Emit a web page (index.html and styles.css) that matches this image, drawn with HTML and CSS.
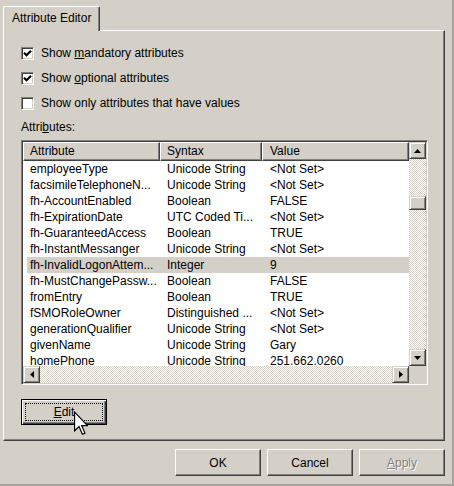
FILE: index.html
```html
<!DOCTYPE html>
<html>
<head>
<meta charset="utf-8">
<link rel="stylesheet" href="styles.css">
</head>
<body>
<div class="window">
  <div class="tabs"><div class="tab">Attribute Editor</div></div>
  <div class="panel">
    <div class="check"><span class="box"><svg width="9" height="9" viewBox="0 0 9 9"><polyline points="1,3.8 3.5,6.3 8,1.8" fill="none" stroke="#000" stroke-width="2.2"/></svg></span><span>Show <u>m</u>andatory attributes</span></div>
    <div class="check"><span class="box"><svg width="9" height="9" viewBox="0 0 9 9"><polyline points="1,3.8 3.5,6.3 8,1.8" fill="none" stroke="#000" stroke-width="2.2"/></svg></span><span>Show <u>o</u>ptional attributes</span></div>
    <div class="check"><span class="box"></span><span>Show only attributes that have values</span></div>
    <div class="label">Attri<u>b</u>utes:</div>
    <div class="listbox">
      <div class="list-main">
        <div class="list-area">
          <div class="header">
            <div class="hcell">Attribute</div>
            <div class="hcell">Syntax</div>
            <div class="hcell">Value</div>
          </div>
          <div class="rows">
            <div class="row"><span>employeeType</span><span>Unicode String</span><span>&lt;Not Set&gt;</span></div>
            <div class="row"><span>facsimileTelephoneN...</span><span>Unicode String</span><span>&lt;Not Set&gt;</span></div>
            <div class="row"><span>fh-AccountEnabled</span><span>Boolean</span><span>FALSE</span></div>
            <div class="row"><span>fh-ExpirationDate</span><span>UTC Coded Ti...</span><span>&lt;Not Set&gt;</span></div>
            <div class="row"><span>fh-GuaranteedAccess</span><span>Boolean</span><span>TRUE</span></div>
            <div class="row"><span>fh-InstantMessanger</span><span>Unicode String</span><span>&lt;Not Set&gt;</span></div>
            <div class="row selected"><span>fh-InvalidLogonAttem...</span><span>Integer</span><span>9</span></div>
            <div class="row"><span>fh-MustChangePassw...</span><span>Boolean</span><span>FALSE</span></div>
            <div class="row"><span>fromEntry</span><span>Boolean</span><span>TRUE</span></div>
            <div class="row"><span>fSMORoleOwner</span><span>Distinguished ...</span><span>&lt;Not Set&gt;</span></div>
            <div class="row"><span>generationQualifier</span><span>Unicode String</span><span>&lt;Not Set&gt;</span></div>
            <div class="row"><span>givenName</span><span>Unicode String</span><span>Gary</span></div>
            <div class="row"><span>homePhone</span><span>Unicode String</span><span>251.662.0260</span></div>
          </div>
        </div>
        <div class="vscroll">
          <div class="sbtn"><svg width="7" height="4" viewBox="0 0 7 4"><polygon points="3.5,0 7,4 0,4" fill="#000"/></svg></div>
          <div class="vtrack"><div class="vthumb"></div></div>
          <div class="sbtn"><svg width="7" height="4" viewBox="0 0 7 4"><polygon points="0,0 7,0 3.5,4" fill="#000"/></svg></div>
        </div>
      </div>
      <div class="hscroll">
        <div class="sbtn"><svg width="4" height="7" viewBox="0 0 4 7"><polygon points="4,0 4,7 0,3.5" fill="#000"/></svg></div>
        <div class="htrack"></div>
        <div class="sbtn"><svg width="4" height="7" viewBox="0 0 4 7"><polygon points="0,0 4,3.5 0,7" fill="#000"/></svg></div>
        <div class="corner"></div>
      </div>
    </div>
    <button class="btn edit"><u>E</u>dit<svg class="cursor" width="14" height="25" viewBox="0 0 12 20.5"><path d="M0.5 0.5 L0.5 16.5 L4.3 12.8 L7.2 19.5 L9.4 18.5 L6.6 12 L11.5 12 Z" fill="#fff" stroke="#000" stroke-width="1" stroke-linejoin="miter"/></svg></button>
  </div>
  <div class="footer">
    <button class="btn">OK</button>
    <button class="btn">Cancel</button>
    <button class="btn disabled"><u>A</u>pply</button>
  </div>
</div>
</body>
</html>
```

FILE: styles.css
```css
* { box-sizing: border-box; }
body {
  margin: 0;
  background: #d4d0c8;
  font-family: "Liberation Sans", Arial, sans-serif;
  font-size: 12px;
  color: #000;
}
.window {
  width: 454px;
  height: 486px;
  padding: 6px 8px 0 3px;
  border-right: 2px solid #a8a49c;
  border-bottom: 2px solid #a8a49c;
  background: #d4d0c8;
}
.tabs {
  display: flex;
  position: relative;
  z-index: 1;
  margin-bottom: -1px;
}
.tab {
  width: 97px;
  height: 25px;
  padding: 4px 0 0 8px;
  line-height: 14px;
  background: #d4d0c8;
  border-top: 1px solid #fff;
  border-left: 1px solid #fff;
  border-right: 1px solid #404040;
  box-shadow: inset -1px 0 #808080;
  border-radius: 2px 2px 0 0;
}
.panel {
  width: 442px;
  height: 411px;
  padding: 16px 0 0 17px;
  border-top: 1px solid #fff;
  border-left: 1px solid #fff;
  border-right: 1px solid #404040;
  border-bottom: 1px solid #404040;
  box-shadow: inset -1px -1px #808080;
}
.check {
  display: flex;
  align-items: center;
  gap: 7px;
  height: 13px;
  line-height: 13px;
  margin-bottom: 12px;
}
.box {
  width: 13px;
  height: 13px;
  background: #fff;
  border-top: 1px solid #808080;
  border-left: 1px solid #808080;
  border-right: 1px solid #fff;
  border-bottom: 1px solid #fff;
  box-shadow: inset 1px 1px #404040, inset -1px -1px #d4d0c8;
  display: flex;
  align-items: center;
  justify-content: center;
}
.box svg { display: block; }
.label {
  height: 13px;
  line-height: 13px;
  margin-top: -1px;
  margin-bottom: 6px;
}
.listbox {
  width: 407px;
  height: 245px;
  border-top: 1px solid #808080;
  border-left: 1px solid #808080;
  border-right: 1px solid #fff;
  border-bottom: 1px solid #fff;
  box-shadow: inset 1px 1px #404040, inset -1px -1px #d4d0c8;
  padding: 1px;
  display: flex;
  flex-direction: column;
  background: #fff;
}
.list-main {
  display: flex;
  height: 224px;
}
.list-area {
  width: 386px;
  overflow: hidden;
}
.header {
  display: grid;
  grid-template-columns: 137px 102px 147px;
  height: 19px;
}
.hcell {
  background: #d4d0c8;
  border-top: 1px solid #fff;
  border-left: 1px solid #fff;
  border-right: 1px solid #404040;
  border-bottom: 1px solid #404040;
  box-shadow: inset -1px -1px #808080;
  padding-left: 6px;
  line-height: 16px;
}
.hcell:nth-child(3) { padding-left: 7px; }
.rows {
  height: 205px;
  overflow: hidden;
  padding-left: 4px;
}
.row {
  display: grid;
  grid-template-columns: 133px 102px 147px;
  height: 16px;
  line-height: 16px;
  white-space: nowrap;
}
.row span { padding-left: 7px; overflow: hidden; }
.row span:first-child { padding-left: 3px; }
.row span:nth-child(3) { padding-left: 8px; }
.row.selected { background: #d4d0c8; }
.vscroll {
  width: 17px;
  display: flex;
  flex-direction: column;
}
.sbtn {
  width: 17px;
  height: 17px;
  flex: none;
  background: #d4d0c8;
  border-top: 1px solid #d4d0c8;
  border-left: 1px solid #d4d0c8;
  border-right: 1px solid #404040;
  border-bottom: 1px solid #404040;
  box-shadow: inset 1px 1px #fff, inset -1px -1px #808080;
  display: flex;
  align-items: center;
  justify-content: center;
}
.sbtn svg { display: block; }
.vtrack, .htrack {
  flex: 1;
  background: repeating-conic-gradient(#ffffff 0 25%, #d4d0c8 0 50%) 0 0 / 2px 2px;
}
.vtrack { padding-top: 37px; }
.vthumb {
  height: 14px;
  background: #d4d0c8;
  border-top: 1px solid #d4d0c8;
  border-left: 1px solid #d4d0c8;
  border-right: 1px solid #404040;
  border-bottom: 1px solid #404040;
  box-shadow: inset 1px 1px #fff, inset -1px -1px #808080;
}
.hscroll {
  display: flex;
  height: 17px;
}
.corner {
  width: 17px;
  background: #d4d0c8;
}
.btn {
  font-family: inherit;
  font-size: 12px;
  color: #000;
  background: #d4d0c8;
  width: 86px;
  height: 27px;
  padding: 0;
  border-top: 1px solid #fff;
  border-left: 1px solid #fff;
  border-right: 1px solid #404040;
  border-bottom: 1px solid #404040;
  box-shadow: inset -1px -1px #808080;
  border-radius: 0;
}
.edit {
  position: relative;
  margin-top: 14px;
  height: 26px;
  border: 1px solid #000;
  box-shadow: inset 1px 1px #fff, inset -1px -1px #404040, inset -2px -2px #808080;
}
.edit::after {
  content: "";
  position: absolute;
  left: 3px;
  top: 3px;
  right: 3px;
  bottom: 3px;
  border: 1px dotted #000;
}
.cursor {
  position: absolute;
  left: 52px;
  top: 11px;
  z-index: 2;
}
.footer {
  display: flex;
  justify-content: flex-end;
  gap: 6px;
  margin-top: 8px;
  width: 442px;
}
.disabled {
  color: #808080;
  text-shadow: 1px 1px #fff;
}
```
